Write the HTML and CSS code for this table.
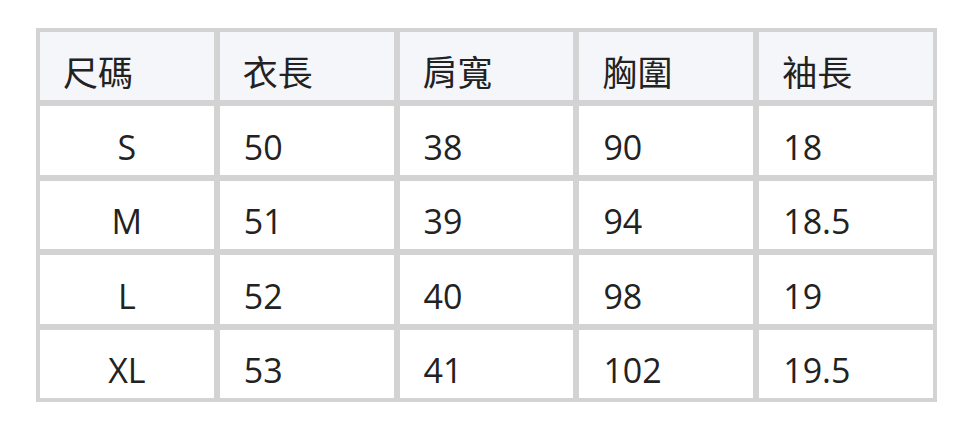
FILE: index.html
```html
<!DOCTYPE html>
<html lang="zh-Hant">
<head>
<meta charset="utf-8">
<link rel="stylesheet" href="styles.css">
</head>
<body>
<div class="size-table">
  <div class="cell head">尺碼</div>
  <div class="cell head">衣長</div>
  <div class="cell head">肩寬</div>
  <div class="cell head">胸圍</div>
  <div class="cell head">袖長</div>

  <div class="cell size">S</div>
  <div class="cell">50</div>
  <div class="cell">38</div>
  <div class="cell">90</div>
  <div class="cell">18</div>

  <div class="cell size">M</div>
  <div class="cell">51</div>
  <div class="cell">39</div>
  <div class="cell">94</div>
  <div class="cell">18.5</div>

  <div class="cell size">L</div>
  <div class="cell">52</div>
  <div class="cell">40</div>
  <div class="cell">98</div>
  <div class="cell">19</div>

  <div class="cell size">XL</div>
  <div class="cell">53</div>
  <div class="cell">41</div>
  <div class="cell">102</div>
  <div class="cell">19.5</div>
</div>
</body>
</html>
```
FILE: styles.css
```css
html, body {
  margin: 0;
  background: #ffffff;
}
body {
  padding: 28px 0 0 36px;
  font-family: "Open Sans", "Noto Sans CJK TC", sans-serif;
  color: #222222;
}
.size-table {
  width: 901px;
  box-sizing: border-box;
  display: grid;
  grid-template-columns: repeat(5, 1fr);
  grid-auto-rows: 68.4px;
  gap: 6px;
  padding: 4px;
  background: #d3d3d3;
}
.cell {
  background: #ffffff;
  display: flex;
  align-items: center;
  padding: 13px 24px 0;
  font-size: 34px;
  line-height: 1;
}
.cell.head {
  background: #f5f6fa;
  font-size: 35px;
  padding-left: 23px;
}
.cell.size {
  justify-content: center;
}
```
